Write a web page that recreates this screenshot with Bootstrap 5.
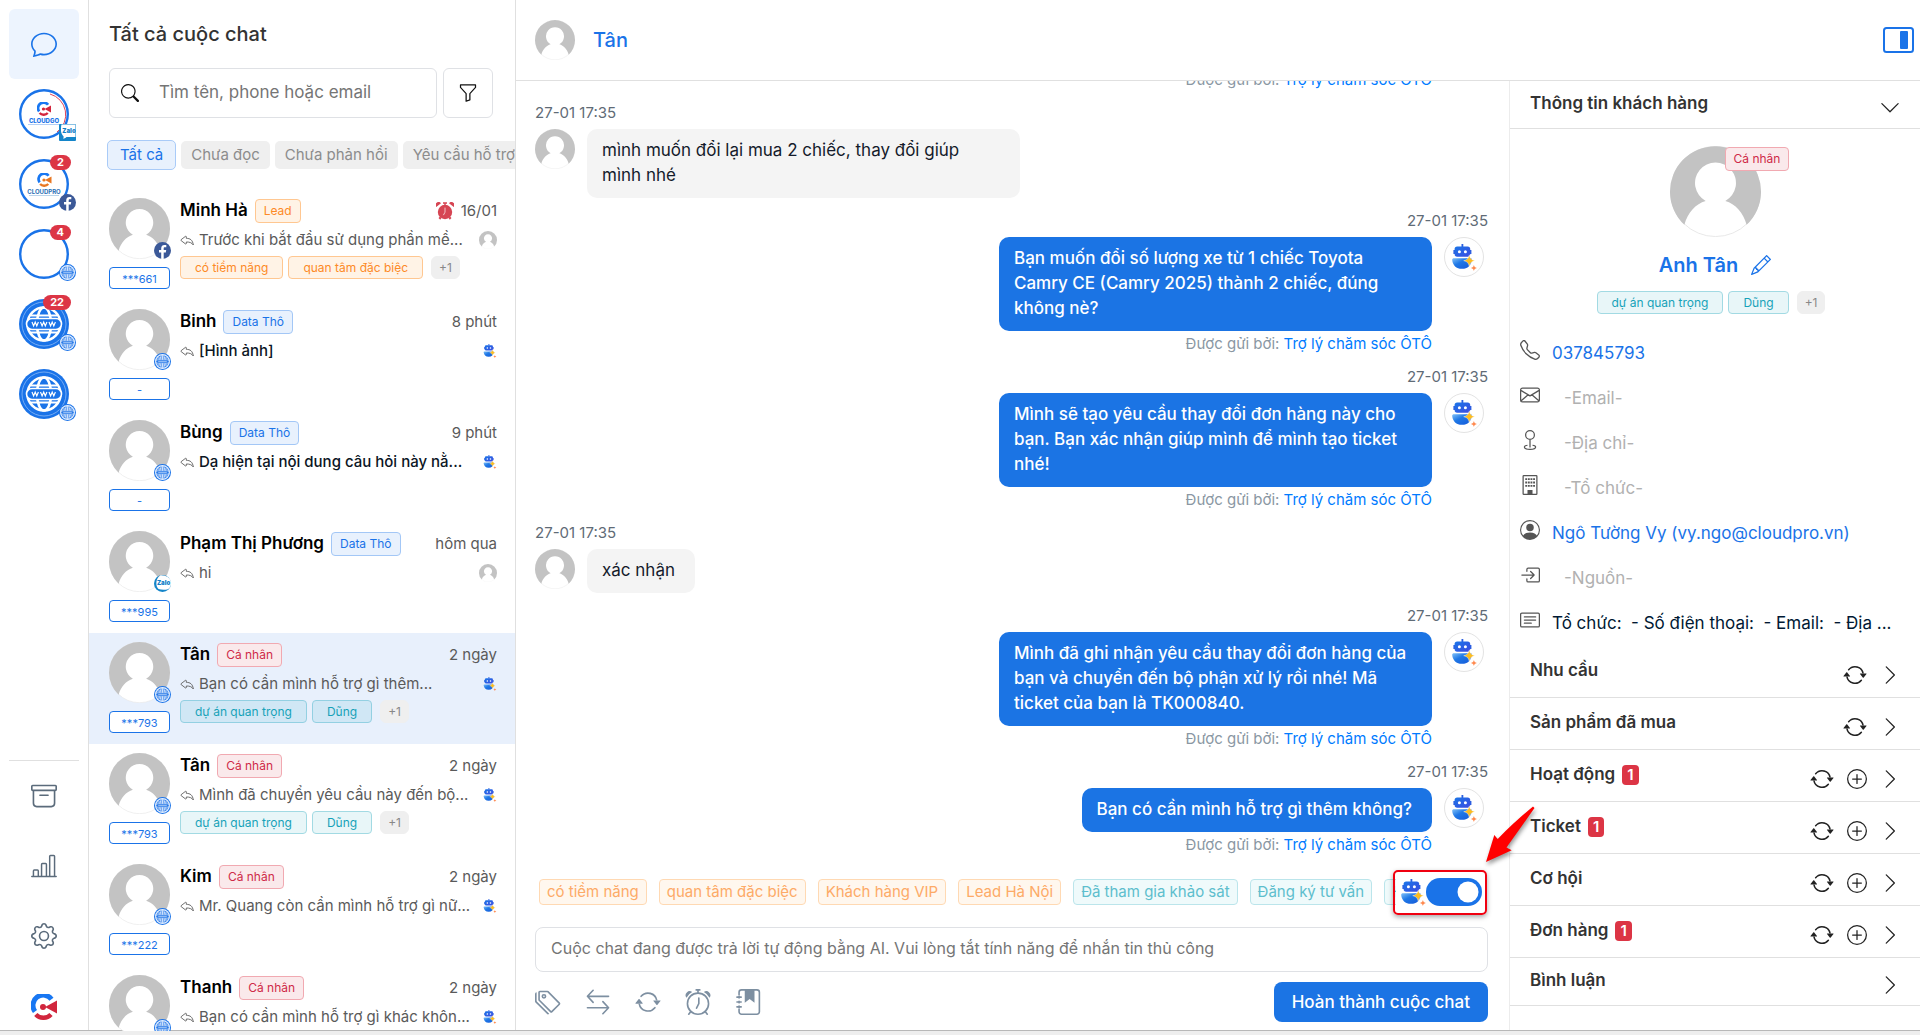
<!DOCTYPE html>
<html lang="vi">
<head>
<meta charset="utf-8">
<meta name="viewport" content="width=device-width, initial-scale=1">
<title>Tất cả cuộc chat</title>
<link href="https://cdn.jsdelivr.net/npm/bootstrap@5.3.0/dist/css/bootstrap.min.css" rel="stylesheet">
<style>
:root{--brand:#1a73e8;--line:#e0e0e0;--ink:#333}
body{font-family:Inter,"Noto Sans",sans-serif;font-size:17px;line-height:25px;color:var(--ink);background:#fff}
a{text-decoration:none}
svg{display:block;flex:none}
.status-strip{height:4px;background:#eee;box-shadow:0 -1px 0 #b8b8b8}
.ic-12{width:12px;height:14px}.ic-14{width:14px;height:14px}.ic-17{width:17px;height:17px}.ic-18{width:18px;height:18px}
.ic-20{width:20px;height:20px}.ic-24{width:24px;height:24px}.ic-26{width:26px;height:26px}

/* channel rail */
.rail{flex:0 0 89px;border-right:1px solid var(--line);padding:9px 9px 0;color:#5b6b7b}
.rail-link{height:70px;color:inherit}
.rail-link.current{background:#edf4fe;border-radius:6px;color:var(--brand)}
.channels{gap:20px;padding-top:10px}
.channel{width:50px;height:50px}
.channel .ring{width:50px;height:50px}
.channel .sub{right:-7px;bottom:-2px}
.count{right:-2px;top:-4px;height:15px;min-width:21px;padding:0 7px;border-radius:8px;background:#dc3545;color:#fff;font-size:11px;font-weight:700;line-height:15px}
.rail-end{border-top:1px solid var(--line)}
.rail-end .brand-link{height:60px;padding-top:12px}

/* conversation list */
.list-pane{flex:0 0 427px;border-right:1px solid var(--line)}
.list-head{padding:19px 22px 0 20px}
.pane-title{font-size:20px;line-height:30px;font-weight:500;margin:0 0 19px}
.search-box{height:50px;border:1px solid #dfe1e5;border-radius:6px;padding:0 11px}
.search-box input{border:0;padding:0 0 0 20px;font-size:17px;color:#333;box-shadow:none!important}
.search-box input::placeholder{color:#757575}
.filter-btn{width:50px;height:50px;border:1px solid #dfe1e5;border-radius:6px;background:#fff;color:#111;padding:0}
.chip-row{gap:5px;padding:22px 0 19px 18px;overflow:hidden}
.chip{height:28px;border:0;border-radius:5px;background:#efefef;color:#8c8c8c;font-size:15px;line-height:28px;padding:0 10px;white-space:nowrap}
.chip.on{height:30px;border:1px solid #a9cbf8;background:#e8f1fd;color:var(--brand);padding:0 12px}
.convo{height:111px;padding:9px 18px 0 20px;gap:10px;color:#5a5a5a;font-size:15px;flex:none}
.convo.current{background:#e8f0fc}
.face{width:61px;height:61px}
.face .sub{right:-1px;bottom:0}
.id-pill{width:61px;height:22px;margin-top:8px;border:1px solid var(--brand);border-radius:4px;background:#fff;color:var(--brand);font-size:11px;line-height:22px;text-align:center}
.convo .name{font-size:17px;font-weight:600;color:#000}
.line-a{height:25px;gap:7px}
.line-b{height:33px;gap:5px;white-space:nowrap}
.unread{font-weight:500;color:#0b1524}
.pill{display:inline-block;height:24px;border:1px solid;border-radius:4px;font-size:12px;line-height:22px;padding:0 8px;white-space:nowrap}
.pill.wide{padding:0 14px;height:23px;line-height:21px}
.pill.more{border-color:#efefef;background:#efefef;color:#888;padding:0 7px;margin-left:3px;border-radius:6px}
.p-orange{color:#fd8a26;background:#fff3e6;border-color:#ffc791}
.p-blue{color:var(--brand);background:#e8f1fd;border-color:#a3c7f6}
.p-red{color:#cf2a48;background:#fae9eb;border-color:#f1a9b1}
.p-teal{color:#17a2b8;background:#e8f6f8;border-color:#a2dae3}
.current .p-teal{background:#d0e7f5;border-color:#93d0e2}
.tag-set{gap:5px}

/* conversation */
.top-bar{height:81px;border-bottom:1px solid var(--line);padding:0 6px 0 19px;gap:18px}
.top-bar .who{font-size:20px;font-weight:500;color:var(--brand)}
.pic{width:40px;height:40px}
.chat-pane{padding:0 21px 9px 19px}
.msg{padding-bottom:12px}
.msg .at{font-size:15px;line-height:21px;margin-bottom:6px;color:#5f6b76}
.msg .bubble{max-width:433px;border-radius:10px;padding:9px 20px 10px 15px;background:#f4f4f4;color:#141b2b}
.msg .mid{gap:12px}
.msg.out .bubble{background:#1b74e4;color:#fff;font-weight:500}
.msg .via{font-size:15px;line-height:21px;padding-top:2px;color:#8a97a3;margin-right:56px}
.via a{color:#007bff}
.bot-pic{width:40px;height:40px;border:1px solid #e3e3e3;border-radius:50%;background:#fff;margin-right:4px}
.bot-pic svg,.ai-toggle .bot{width:25px;height:27px}
.tag-bar{height:50px}
.tag-scroll{gap:12px;padding-left:4px;overflow:hidden}
.tag-scroll .pill{flex:none;font-size:15px;height:26px;line-height:24px;padding:0 7px}
.tag-scroll .p-orange{color:#fdaa67;background:#fff7ee;border-color:#ffd9b3}
.tag-scroll .p-teal{color:#5dbecd;background:#effafb;border-color:#bbe5eb}
.ai-toggle{width:92px;height:45px;padding-left:5px}
.ai-toggle .form-check-input{width:56px;height:28px;margin:0;border:0;background-color:var(--brand);box-shadow:none}
.callout{inset:0 1px 0 -3px;border:2px solid #f00010;border-radius:5px;box-shadow:0 2px 5px rgba(0,0,0,.35);pointer-events:none}
.callout-arrow{left:88px;top:-66px;width:54px;height:62px;z-index:5;filter:drop-shadow(1px 3px 2px rgba(0,0,0,.4))}
.reply-box{height:45px;margin-top:10px;border:1px solid #dfe1e5;border-radius:8px;padding:0 15px 3px;font-size:16px;background:#fff}
.reply-box::placeholder{color:#757575}
.tool-row{margin-top:10px;gap:24px;color:#7d8fa1}
.tool-row .tool{border:0;background:none;padding:0;color:inherit}
.done-btn{height:40px;padding:0 18px;border:0;border-radius:8px;background:#1b74e4;font-size:17px;font-weight:500;line-height:25px}

/* customer panel */
.info-pane{flex:0 0 411px;border-left:1px solid #ececec}
.sec{height:52px;border-bottom:1px solid var(--line);padding:0 20px;font-weight:600;font-size:17px}
.sec.short{height:48px}
.sec h2{font-size:17px;line-height:25px;font-weight:600;margin:0 0 2px}
.sec .num{display:inline-block;background:#dc3545;color:#fff;border-radius:4px;font-size:15px;line-height:20px;padding:0 5px;margin-left:7px;font-weight:600}
.sec .acts{gap:13px;padding-top:6px}
.sec button{border:0;background:none;padding:0;color:#222}
.profile{padding-top:17px}
.big-pic{width:91px;height:91px}
.profile .pill.over{left:55px;top:1px}
.profile .full{font-size:20px;line-height:30px;font-weight:600;color:var(--brand);margin:13px 0 11px;gap:13px}
.profile .tag-set{padding:0 8px 17px 0}
.fact{height:45px;padding:0 16px 0 10px;gap:12px;color:#001833}
.fact svg{margin-bottom:7px;color:#555}
.fact .blank{color:#b1b1b1;padding-left:12px}
.fact a{color:var(--brand)}
</style>
</head>
<body class="vh-100 d-flex flex-column overflow-hidden">

<svg width="0" height="0" class="position-absolute" aria-hidden="true">
<defs>
<linearGradient id="gHead" x1="0" y1="0" x2="1" y2="1"><stop offset="0" stop-color="#1976e8"/><stop offset="1" stop-color="#3d4be0"/></linearGradient>
<linearGradient id="gBody" x1="0" y1="0" x2="1" y2="1"><stop offset="0" stop-color="#7fc0f8"/><stop offset=".4" stop-color="#1f78e6"/><stop offset="1" stop-color="#1558d8"/></linearGradient>
<symbol id="user" viewBox="0 0 60 60"><circle cx="30" cy="30" r="29.7" fill="#fff" stroke="#e6e6e6" stroke-width=".6"/><path fill="#c3c3c3" d="M9.5 52C11.500 44 17 38 23.500 36.200A13.500 13.500 0 1 1 36.500 36.200C43 38 48.500 44 50.500 52A30 30 0 1 0 9.500 52z"/></symbol>
<symbol id="bot" viewBox="0 0 25 27"><path fill="#2a5fe0" d="M9.500 0h1.800v3H9.500zM1.400 6h2v4h-2zM17.400 6h2v4h-2z"/><rect x="2.600" y="2.400" width="15.600" height="10.300" rx="2.600" fill="url(#gHead)"/><circle cx="7.400" cy="7.800" r="1.500" fill="#fff"/><circle cx="13.400" cy="7.800" r="1.500" fill="#fff"/><path fill="url(#gBody)" d="M2 14.300h16.500c1 0 1.500.6 1.300 1.700-.5 5.300-4 8.800-9.800 8.800S.7 21.300.2 16c-.2-1.100.7-1.700 1.800-1.700z"/><path fill="#fdbc1f" stroke="#fff" stroke-width=".4" d="M17.300 10.800c.8 3.800 1.900 5 5.600 5.900-3.700.9-4.800 2.100-5.600 5.900-.8-3.800-1.900-5-5.600-5.900 3.700-.9 4.800-2.100 5.600-5.900z"/><path fill="#ff8a50" d="M21.900 21c.5 2 1.100 2.500 3 3-1.900.5-2.500 1-3 3-.5-2-1.100-2.500-3-3 1.900-.5 2.500-1 3-3z"/></symbol>
<symbol id="www" viewBox="0 0 50 50"><circle cx="25" cy="25" r="25" fill="#1a73e8"/><circle cx="25" cy="25" r="22" fill="none" stroke="#7fb2f5" stroke-width=".9"/><g fill="none" stroke="#fff" stroke-width="2.600"><circle cx="25" cy="25" r="16.500"/><ellipse cx="25" cy="25" rx="7" ry="16.500"/></g><path stroke="#fff" stroke-width="2" d="M12 16.500h26M12 33.500h26"/><rect x="7.500" y="19.500" width="35" height="11" rx="5.500" fill="#1a73e8" stroke="#fff" stroke-width="1.600"/><path fill="none" stroke="#fff" stroke-width="1.200" d="M13 23l1.600 4 1.600-4 1.600 4 1.600-4M21.500 23l1.600 4 1.600-4 1.600 4 1.600-4M30 23l1.600 4 1.600-4 1.600 4 1.600-4"/></symbol>
<symbol id="web" viewBox="0 0 17 17"><circle cx="8.500" cy="8.500" r="8.500" fill="#1a73e8"/><circle cx="8.500" cy="8.500" r="7.500" fill="#e4effe"/><circle cx="8.500" cy="8.500" r="6.200" fill="#2a7ae8"/><g fill="none" stroke="#d8e8fd" stroke-width=".9"><ellipse cx="8.500" cy="8.500" rx="2.800" ry="6.200"/><path d="M8.500 2.300v12.400M3.500 5h10M3.500 12h10"/></g><rect x="1.800" y="6.800" width="13.400" height="3.400" rx="1.700" fill="#2a7ae8" stroke="#e4effe" stroke-width=".7"/><path stroke="#a9cbf8" stroke-width=".8" d="M4.200 8.500h8.600"/></symbol>
<symbol id="fb" viewBox="0 0 17 17"><circle cx="8.500" cy="8.500" r="8.500" fill="#3b5998"/><path fill="#fff" d="M7.200 17V10.600H5V8h2.200V6.200c0-2.100 1.300-3.300 3.200-3.300.9 0 1.700.1 1.900.2v2.200H11c-1.100 0-1.300.5-1.300 1.200V8h2.500l-.4 2.600H9.700V17z"/></symbol>
<symbol id="zaloSq" viewBox="0 0 17 17"><rect width="17" height="17" rx="1" fill="#1485c9"/><path fill="#fff" d="M2.500.5h14v12.500H7.500c-1 1-2.200 1.500-3.500 1.600.6-.7.8-1.500.6-2.200C2.800 10.500 2 8.500 2 6.500 2 4 2 2 2.500.5z"/><text x="10" y="9" text-anchor="middle" font-size="6" font-weight="900" font-family="Inter,sans-serif" fill="#0f80c8">Zalo</text></symbol>
<symbol id="zalo" viewBox="0 0 17 17"><circle cx="8.500" cy="8.500" r="8.500" fill="#1485c9"/><path fill="#fff" d="M6 .4C12 0 17 3 17 8c0 3-1 5-3 6.300-3 .8-7 .6-9.500-.2C1.500 11 1.300 4 6 .4z"/><text x="9.600" y="9.500" text-anchor="middle" font-size="6" font-weight="900" font-family="Inter,sans-serif" fill="#0f80c8">Zalo</text></symbol>
<symbol id="cmark" viewBox="0 0 26 26"><path fill="none" stroke="#1877f2" stroke-width="5" d="M20.500 5.200A10 10 0 0 0 4 17.500"/><path fill="none" stroke="currentColor" stroke-width="4.500" d="M4.800 20.500A10.500 10.500 0 0 0 20 20.500"/><circle cx="12" cy="13" r="3" fill="currentColor"/><path fill="currentColor" d="M14 13l12-6.500v13z"/></symbol>
<symbol id="chat" viewBox="0 0 16 16"><path d="M2.678 11.894a1 1 0 0 1 .287.801 11 11 0 0 1-.398 2c1.395-.323 2.247-.697 2.634-.893a1 1 0 0 1 .71-.074A8 8 0 0 0 8 14c3.996 0 7-2.807 7-6s-3.004-6-7-6-7 2.808-7 6c0 1.468.617 2.830 1.678 3.894m-.493 3.905a22 22 0 0 1-.713.129c-.2.032-.352-.176-.273-.362a10 10 0 0 0 .244-.637l.003-.01c.248-.72.45-1.548.524-2.319C.743 11.370 0 9.760 0 8c0-3.866 3.582-7 8-7s8 3.134 8 7-3.582 7-8 7a9 9 0 0 1-2.347-.306c-.52.263-1.639.742-3.468 1.105"/></symbol>
<symbol id="search" viewBox="0 0 16 16"><path d="M11.742 10.344a6.500 6.500 0 1 0-1.397 1.398h-.001q.044.06.098.115l3.850 3.850a1 1 0 0 0 1.415-1.414l-3.850-3.850a1 1 0 0 0-.115-.1zM12 6.500a5.500 5.500 0 1 1-11 0 5.500 5.500 0 0 1 11 0"/></symbol>
<symbol id="funnel" viewBox="0 0 16 16"><path d="M1.500 1.500A.5.5 0 0 1 2 1h12a.5.5 0 0 1 .5.5v2a.5.5 0 0 1-.128.334L10 8.692V13.500a.5.5 0 0 1-.342.474l-3 1A.5.5 0 0 1 6 14.500V8.692L1.628 3.834A.5.5 0 0 1 1.500 3.500zm1 .5v1.308l4.372 4.858A.5.5 0 0 1 7 8.500v5.306l2-.666V8.500a.5.5 0 0 1 .128-.334L13.500 3.308V2z"/></symbol>
<symbol id="reply" viewBox="0 0 16 16"><path fill="none" stroke="currentColor" stroke-linejoin="round" d="M7.200 10.300v1.800c0 .5-.5.700-.9.400L1.300 8.700a.7.7 0 0 1 0-1.100l5-3.800c.4-.3.900-.1.900.4v1.900c4.500 0 7.300 2 8 7.600-1.800-2.700-4.300-3.500-8-3.400z"/></symbol>
<symbol id="archive" viewBox="0 0 16 16"><path d="M0 2a1 1 0 0 1 1-1h14a1 1 0 0 1 1 1v2a1 1 0 0 1-1 1v7.500a2.500 2.500 0 0 1-2.500 2.500h-9A2.500 2.500 0 0 1 1 12.500V5a1 1 0 0 1-1-1zm2 3v7.500A1.500 1.500 0 0 0 3.500 14h9a1.500 1.500 0 0 0 1.500-1.500V5zm13-3H1v2h14zM5 7.500a.5.5 0 0 1 .5-.5h5a.5.5 0 0 1 0 1h-5a.5.5 0 0 1-.5-.5"/></symbol>
<symbol id="bars" viewBox="0 0 16 16"><path fill="none" stroke="currentColor" stroke-width=".9" stroke-linecap="round" d="M.5 14.500h15M1.500 14.500v-3.500a.5.5 0 0 1 .5-.5h2a.5.5 0 0 1 .5.5v3.500M6.500 14.500V7a.5.5 0 0 1 .5-.5h2a.5.5 0 0 1 .5.5v7.500M11.500 14.500V2a.5.5 0 0 1 .5-.5h2a.5.5 0 0 1 .5.5v12.500"/></symbol>
<symbol id="gear" viewBox="0 0 16 16"><path d="M8 4.754a3.246 3.246 0 1 0 0 6.492 3.246 3.246 0 0 0 0-6.492M5.754 8a2.246 2.246 0 1 1 4.492 0 2.246 2.246 0 0 1-4.492 0"/><path d="M9.796 1.343c-.527-1.790-3.065-1.790-3.592 0l-.094.319a.873.873 0 0 1-1.255.52l-.292-.16c-1.640-.892-3.433.902-2.540 2.541l.159.292a.873.873 0 0 1-.52 1.255l-.319.094c-1.790.527-1.790 3.065 0 3.592l.319.094a.873.873 0 0 1 .52 1.255l-.16.292c-.892 1.640.901 3.434 2.541 2.540l.292-.159a.873.873 0 0 1 1.255.52l.094.319c.527 1.790 3.065 1.790 3.592 0l.094-.319a.873.873 0 0 1 1.255-.52l.292.16c1.640.893 3.434-.902 2.540-2.541l-.159-.292a.873.873 0 0 1 .52-1.255l.319-.094c1.790-.527 1.790-3.065 0-3.592l-.319-.094a.873.873 0 0 1-.52-1.255l.16-.292c.893-1.640-.902-3.433-2.541-2.540l-.292.159a.873.873 0 0 1-1.255-.52zm-2.633.283c.246-.835 1.428-.835 1.674 0l.094.319a1.873 1.873 0 0 0 2.693 1.115l.291-.16c.764-.415 1.600.42 1.184 1.185l-.159.292a1.873 1.873 0 0 0 1.116 2.692l.318.094c.835.246.835 1.428 0 1.674l-.319.094a1.873 1.873 0 0 0-1.115 2.693l.16.291c.415.764-.42 1.600-1.185 1.184l-.291-.159a1.873 1.873 0 0 0-2.693 1.116l-.094.318c-.246.835-1.428.835-1.674 0l-.094-.319a1.873 1.873 0 0 0-2.692-1.115l-.292.16c-.764.415-1.600-.42-1.184-1.185l.159-.291A1.873 1.873 0 0 0 1.945 8.930l-.319-.094c-.835-.246-.835-1.428 0-1.674l.319-.094A1.873 1.873 0 0 0 3.060 4.377l-.16-.292c-.415-.764.42-1.600 1.185-1.184l.292.159a1.873 1.873 0 0 0 2.692-1.115z"/></symbol>
<symbol id="repeat" viewBox="0 0 16 16"><path d="M11.534 7h3.932a.25.25 0 0 1 .192.41l-1.966 2.360a.25.25 0 0 1-.384 0l-1.966-2.360a.25.25 0 0 1 .192-.41m-11 2h3.932a.25.25 0 0 0 .192-.41L2.692 6.230a.25.25 0 0 0-.384 0L.342 8.590A.25.25 0 0 0 .534 9"/><path d="M8 3c-1.552 0-2.940.707-3.857 1.818a.5.5 0 1 1-.771-.636A6.002 6.002 0 0 1 13.917 7H12.900A5 5 0 0 0 8 3M3.100 9a5.002 5.002 0 0 0 8.757 2.182.5.5 0 1 1 .771.636A6.002 6.002 0 0 1 2.083 9z"/></symbol>
<symbol id="plus" viewBox="0 0 16 16"><path fill="none" stroke="currentColor" stroke-linecap="round" d="M8 4.500v7M4.500 8h7M8 .5a7.500 7.500 0 1 0 0 15 7.500 7.500 0 0 0 0-15z"/></symbol>
<symbol id="right" viewBox="0 0 16 16"><path fill="none" stroke="currentColor" stroke-linecap="round" stroke-linejoin="round" d="M5 1.500L11.500 8 5 14.500"/></symbol>
<symbol id="down" viewBox="0 0 16 16"><path fill="none" stroke="currentColor" stroke-linecap="round" stroke-linejoin="round" d="M1.500 4.500L8 11l6.500-6.500"/></symbol>
<symbol id="alarmRed" viewBox="0 0 18 18"><circle cx="9" cy="10" r="7.200" fill="#d64553"/><path fill="#d64553" d="M.2 5A3 3 0 0 1 5 1.200zM17.800 5A3 3 0 0 0 13 1.200zM7 .3h4v1.500H7zM8.300 1h1.400v2H8.300zM2.500 16l1.500-1.500 1.500 1.500-1.300 1.700zM15.500 16L14 14.500 12.500 16l1.300 1.700z"/><path fill="none" stroke="#f3c4c9" stroke-width="1" stroke-linecap="round" d="M9 6v4.200l-1.400 2.600"/></symbol>
<symbol id="alarm" viewBox="0 0 16 16"><g fill="none" stroke="currentColor" stroke-linecap="round"><circle cx="8" cy="9" r="6.500"/><path d="M8.500 5.500V9l-1.400 2.800M3.600 13.800l-1.300 1.700M12.400 13.800l1.300 1.700"/></g><path fill="currentColor" d="M6.500 0h3v1h-1v1.600h-1V1h-1zM.9 5.400A2.500 2.500 0 0 1 4.400 1.900 8 8 0 0 0 .9 5.400zM15.100 5.400a2.500 2.500 0 0 0-3.500-3.500 8 8 0 0 1 3.500 3.500z"/></symbol>
<symbol id="tags" viewBox="0 0 16 16"><path d="M3 2v4.586l7 7L14.586 9l-7-7zM2 2a1 1 0 0 1 1-1h4.586a1 1 0 0 1 .707.293l7 7a1 1 0 0 1 0 1.414l-4.586 4.586a1 1 0 0 1-1.414 0l-7-7A1 1 0 0 1 2 6.586z"/><path d="M5.500 5a.5.5 0 1 1 0-1 .5.5 0 0 1 0 1m0 1a1.500 1.500 0 1 0 0-3 1.500 1.500 0 0 0 0 3M1 7.086a1 1 0 0 0 .293.707L8.750 15.250l-.043.043a1 1 0 0 1-1.414 0l-7-7A1 1 0 0 1 0 7.586V3a1 1 0 0 1 1-1z"/></symbol>
<symbol id="swap" viewBox="0 0 16 16"><path fill="none" stroke="currentColor" stroke-linecap="round" stroke-linejoin="round" d="M5 .8L1.500 4.500 5 8.200M1.500 4.500h13M11 7.800l3.500 3.700-3.500 3.700M14.500 11.500h-13"/></symbol>
<symbol id="journal" viewBox="0 0 16 16"><path fill="none" stroke="currentColor" stroke-linecap="round" d="M2.500 3.500V2A1.500 1.500 0 0 1 4 .5h9.500A1.500 1.500 0 0 1 15 2v12a1.500 1.500 0 0 1-1.500 1.500H4A1.500 1.500 0 0 1 2.500 14v-1.500M1.200 5h2.600M1.200 8h2.600M1.200 11h2.600M2.500 4.500v1M2.500 7.500v1M2.500 10.500v1"/><path fill="currentColor" d="M6 .5h6v8L9 6.200 6 8.500z"/></symbol>
<symbol id="layout" viewBox="0 0 31 26"><rect x="1" y="1" width="29" height="24" rx="2.500" fill="none" stroke="currentColor" stroke-width="2"/><rect x="17" y="4" width="8" height="18" rx="1" fill="currentColor"/></symbol>
<symbol id="pencil" viewBox="0 0 16 16"><path d="M12.146.146a.5.5 0 0 1 .708 0l3 3a.5.5 0 0 1 0 .708l-10 10a.5.5 0 0 1-.168.11l-5 2a.5.5 0 0 1-.65-.65l2-5a.5.5 0 0 1 .11-.168zM11.207 2.500 13.500 4.793 14.793 3.500 12.500 1.207zm1.586 3L10.500 3.207 4 9.707V10h.5a.5.5 0 0 1 .5.5v.5h.5a.5.5 0 0 1 .5.5v.5h.293zm-9.761 5.175-.106.106-1.528 3.821 3.821-1.528.106-.106A.5.5 0 0 1 5 12.500V12h-.5a.5.5 0 0 1-.5-.5V11h-.5a.5.5 0 0 1-.468-.325"/></symbol>
<symbol id="phone" viewBox="0 0 16 16"><path d="M3.654 1.328a.678.678 0 0 0-1.015-.063L1.605 2.300c-.483.484-.661 1.169-.45 1.770a17.600 17.600 0 0 0 4.168 6.608 17.600 17.600 0 0 0 6.608 4.168c.601.211 1.286.033 1.770-.45l1.034-1.034a.678.678 0 0 0-.063-1.015l-2.307-1.794a.68.68 0 0 0-.58-.122l-2.190.547a1.750 1.750 0 0 1-1.657-.459L5.482 8.062a1.750 1.750 0 0 1-.46-1.657l.548-2.190a.68.68 0 0 0-.122-.58zM1.884.511a1.745 1.745 0 0 1 2.612.163L6.290 2.980c.329.423.445.974.315 1.494l-.547 2.190a.68.68 0 0 0 .178.643l2.457 2.457a.68.68 0 0 0 .644.178l2.189-.547a1.750 1.750 0 0 1 1.494.315l2.306 1.794c.829.645.905 1.870.163 2.611l-1.034 1.034c-.74.74-1.846 1.065-2.877.702a18.600 18.600 0 0 1-7.010-4.420 18.600 18.600 0 0 1-4.420-7.009c-.362-1.030-.037-2.137.703-2.877z"/></symbol>
<symbol id="mail" viewBox="0 0 16 16"><path fill="none" stroke="currentColor" stroke-linejoin="round" d="M2 2.500h12a1.500 1.500 0 0 1 1.500 1.500v8a1.500 1.500 0 0 1-1.500 1.500H2A1.500 1.500 0 0 1 .5 12V4A1.500 1.500 0 0 1 2 2.500zM.7 4.300L8 8.700l7.300-4.400M.7 12.800l5.800-5M15.300 12.800l-5.800-5"/></symbol>
<symbol id="pin" viewBox="0 0 16 16"><path fill="none" stroke="currentColor" d="M8 .5a3.500 3.500 0 1 0 0 7 3.500 3.500 0 0 0 0-7zM8 7.500v6.500M6 12.200c-1.500.2-2.500.7-2.500 1.400 0 1 2 1.900 4.500 1.900s4.500-.9 4.500-1.900c0-.7-1-1.200-2.500-1.400"/></symbol>
<symbol id="building" viewBox="0 0 16 16"><rect x="2.500" y=".5" width="11" height="15" rx=".5" fill="none" stroke="currentColor"/><path fill="currentColor" d="M4.200 2.500h1.500V4H4.200zM6.300 2.500h1.500V4H6.300zM8.400 2.500h1.500V4H8.400zM10.500 2.500H12V4h-1.500zM4.200 5.200h1.500v1.500H4.200zM6.300 5.200h1.500v1.500H6.300zM8.400 5.200h1.500v1.500H8.400zM10.500 5.200H12v1.500h-1.500zM4.200 7.900h1.500v1.500H4.200zM6.300 7.900h1.500v1.500H6.300zM8.400 7.900h1.500v1.500H8.400zM10.500 7.900H12v1.500h-1.500zM6 12h4v3.500H6z"/></symbol>
<symbol id="person" viewBox="0 0 16 16"><path d="M11 6a3 3 0 1 1-6 0 3 3 0 0 1 6 0"/><path fill-rule="evenodd" d="M0 8a8 8 0 1 1 16 0A8 8 0 0 1 0 8m8-7a7 7 0 0 0-5.468 11.370C3.242 11.226 4.805 10 8 10s4.757 1.225 5.468 2.370A7 7 0 0 0 8 1"/></symbol>
<symbol id="enter" viewBox="0 0 16 16"><path fill="none" stroke="currentColor" stroke-linecap="round" stroke-linejoin="round" d="M5.500 5V3.500a1 1 0 0 1 1-1h8a1 1 0 0 1 1 1v9a1 1 0 0 1-1 1h-8a1 1 0 0 1-1-1V11M1.500 8H11M8.500 5.200L11.300 8l-2.800 2.800"/></symbol>
<symbol id="note" viewBox="0 0 16 16"><path fill="none" stroke="currentColor" stroke-linecap="round" d="M1.500 2.500h13a1 1 0 0 1 1 1v9a1 1 0 0 1-1 1h-13a1 1 0 0 1-1-1v-9a1 1 0 0 1 1-1zM3.500 5.500h9M3.500 8h9M3.500 10.500h5.500"/></symbol>
</defs></svg>

<div class="d-flex flex-grow-1 overflow-hidden">

<nav class="rail d-flex flex-column" aria-label="Kênh">
  <a href="#" class="rail-link current d-flex align-items-center justify-content-center"><svg class="ic-26" fill="currentColor"><use href="#chat"/></svg></a>
  <div class="channels d-flex flex-column align-items-center">
    <a href="#" class="channel position-relative">
      <svg class="ring" viewBox="0 0 50 50"><circle cx="25" cy="25" r="23.800" fill="#fff" stroke="#1a73e8" stroke-width="2.400"/><path d="M31 5a21.500 21.500 0 0 1 7 38" fill="none" stroke="#e0455a" stroke-width="1"/><g color="#d3243c"><use href="#cmark" x="18" y="13" width="14" height="14"/></g><text x="25" y="33.500" text-anchor="middle" font-size="6" font-weight="800" font-family="Inter,sans-serif" fill="#1a73e8">CLOUDGO</text><path stroke="#9fc3f2" stroke-width=".8" d="M9 35.500h32"/></svg>
      <svg class="ic-17 sub position-absolute"><use href="#zaloSq"/></svg>
    </a>
    <a href="#" class="channel position-relative">
      <svg class="ring" viewBox="0 0 50 50"><circle cx="25" cy="25" r="23.800" fill="#fff" stroke="#1a73e8" stroke-width="2.400"/><g color="#e87722"><use href="#cmark" x="18" y="14" width="15" height="14"/></g><text x="25" y="34.500" text-anchor="middle" font-size="6" font-weight="700" font-family="Inter,sans-serif" fill="#2a6fb5">CLOUDPRO</text><path stroke="#a9c9e6" stroke-width=".8" d="M10 36.500h30"/></svg>
      <span class="count position-absolute text-center">2</span>
      <svg class="ic-17 sub position-absolute"><use href="#fb"/></svg>
    </a>
    <a href="#" class="channel position-relative">
      <svg class="ring" viewBox="0 0 50 50"><circle cx="25" cy="25" r="23.800" fill="#fff" stroke="#1a73e8" stroke-width="2.400"/></svg>
      <span class="count position-absolute text-center">4</span>
      <svg class="ic-17 sub position-absolute"><use href="#web"/></svg>
    </a>
    <a href="#" class="channel position-relative">
      <svg class="ring"><use href="#www"/></svg>
      <span class="count position-absolute text-center">22</span>
      <svg class="ic-17 sub position-absolute"><use href="#web"/></svg>
    </a>
    <a href="#" class="channel position-relative">
      <svg class="ring"><use href="#www"/></svg>
      <svg class="ic-17 sub position-absolute"><use href="#web"/></svg>
    </a>
  </div>
  <div class="rail-end mt-auto">
    <a href="#" class="rail-link d-flex align-items-center justify-content-center"><svg class="ic-26" fill="#5b6b7b"><use href="#archive"/></svg></a>
    <a href="#" class="rail-link d-flex align-items-center justify-content-center"><svg class="ic-26" color="#5b6b7b"><use href="#bars"/></svg></a>
    <a href="#" class="rail-link d-flex align-items-center justify-content-center"><svg class="ic-26" fill="#5b6b7b"><use href="#gear"/></svg></a>
    <a href="#" class="brand-link d-flex align-items-center justify-content-center"><svg class="ic-26" color="#d1263d"><use href="#cmark"/></svg></a>
  </div>
</nav>

<aside class="list-pane d-flex flex-column overflow-hidden">
  <div class="list-head">
    <h1 class="pane-title">Tất cả cuộc chat</h1>
    <div class="d-flex" style="gap:6px">
      <label class="search-box d-flex align-items-center flex-grow-1"><svg class="ic-18" fill="#111"><use href="#search"/></svg><input type="text" class="form-control" placeholder="Tìm tên, phone hoặc email" aria-label="Tìm kiếm"></label>
      <button type="button" class="filter-btn d-flex align-items-center justify-content-center" aria-label="Lọc"><svg class="ic-20" fill="currentColor"><use href="#funnel"/></svg></button>
    </div>
  </div>
  <div class="chip-row d-flex align-items-center flex-shrink-0">
    <button type="button" class="chip on">Tất cả</button><button type="button" class="chip">Chưa đọc</button><button type="button" class="chip">Chưa phản hồi</button><button type="button" class="chip">Yêu cầu hỗ trợ</button>
  </div>

  <a href="#" class="convo d-flex">
    <div><div class="face position-relative"><svg class="w-100 h-100"><use href="#user"/></svg><svg class="ic-17 sub position-absolute"><use href="#fb"/></svg></div><div class="id-pill">***661</div></div>
    <div class="flex-grow-1">
      <div class="line-a d-flex align-items-center"><span class="name">Minh Hà</span><span class="pill p-orange">Lead</span><svg class="ic-18 ms-auto"><use href="#alarmRed"/></svg><span>16/01</span></div>
      <div class="line-b d-flex align-items-center"><svg class="ic-14"><use href="#reply"/></svg><span>Trước khi bắt đầu sử dụng phần mề...</span><svg class="ic-18 ms-auto"><use href="#user"/></svg></div>
      <div class="tag-set d-flex"><span class="pill wide p-orange">có tiềm năng</span><span class="pill wide p-orange">quan tâm đặc biệc</span><span class="pill wide more">+1</span></div>
    </div>
  </a>
  <a href="#" class="convo d-flex">
    <div><div class="face position-relative"><svg class="w-100 h-100"><use href="#user"/></svg><svg class="ic-17 sub position-absolute"><use href="#web"/></svg></div><div class="id-pill">-</div></div>
    <div class="flex-grow-1">
      <div class="line-a d-flex align-items-center"><span class="name">Binh</span><span class="pill p-blue">Data Thô</span><span class="ms-auto">8 phút</span></div>
      <div class="line-b d-flex align-items-center"><svg class="ic-14"><use href="#reply"/></svg><span class="unread">[Hình ảnh]</span><svg class="ic-14 ms-auto"><use href="#bot"/></svg></div>
    </div>
  </a>
  <a href="#" class="convo d-flex">
    <div><div class="face position-relative"><svg class="w-100 h-100"><use href="#user"/></svg><svg class="ic-17 sub position-absolute"><use href="#web"/></svg></div><div class="id-pill">-</div></div>
    <div class="flex-grow-1">
      <div class="line-a d-flex align-items-center"><span class="name">Bùng</span><span class="pill p-blue">Data Thô</span><span class="ms-auto">9 phút</span></div>
      <div class="line-b d-flex align-items-center"><svg class="ic-14"><use href="#reply"/></svg><span class="unread">Dạ hiện tại nội dung câu hỏi này nằ...</span><svg class="ic-14 ms-auto"><use href="#bot"/></svg></div>
    </div>
  </a>
  <a href="#" class="convo d-flex">
    <div><div class="face position-relative"><svg class="w-100 h-100"><use href="#user"/></svg><svg class="ic-17 sub position-absolute"><use href="#zalo"/></svg></div><div class="id-pill">***995</div></div>
    <div class="flex-grow-1">
      <div class="line-a d-flex align-items-center"><span class="name">Phạm Thị Phương</span><span class="pill p-blue">Data Thô</span><span class="ms-auto">hôm qua</span></div>
      <div class="line-b d-flex align-items-center"><svg class="ic-14"><use href="#reply"/></svg><span>hi</span><svg class="ic-18 ms-auto"><use href="#user"/></svg></div>
    </div>
  </a>
  <a href="#" class="convo current d-flex">
    <div><div class="face position-relative"><svg class="w-100 h-100"><use href="#user"/></svg><svg class="ic-17 sub position-absolute"><use href="#web"/></svg></div><div class="id-pill">***793</div></div>
    <div class="flex-grow-1">
      <div class="line-a d-flex align-items-center"><span class="name">Tân</span><span class="pill p-red">Cá nhân</span><span class="ms-auto">2 ngày</span></div>
      <div class="line-b d-flex align-items-center"><svg class="ic-14"><use href="#reply"/></svg><span>Bạn có cần mình hỗ trợ gì thêm...</span><svg class="ic-14 ms-auto"><use href="#bot"/></svg></div>
      <div class="tag-set d-flex"><span class="pill wide p-teal">dự án quan trọng</span><span class="pill wide p-teal">Dũng</span><span class="pill wide more">+1</span></div>
    </div>
  </a>
  <a href="#" class="convo d-flex">
    <div><div class="face position-relative"><svg class="w-100 h-100"><use href="#user"/></svg><svg class="ic-17 sub position-absolute"><use href="#web"/></svg></div><div class="id-pill">***793</div></div>
    <div class="flex-grow-1">
      <div class="line-a d-flex align-items-center"><span class="name">Tân</span><span class="pill p-red">Cá nhân</span><span class="ms-auto">2 ngày</span></div>
      <div class="line-b d-flex align-items-center"><svg class="ic-14"><use href="#reply"/></svg><span>Mình đã chuyển yêu cầu này đến bộ...</span><svg class="ic-14 ms-auto"><use href="#bot"/></svg></div>
      <div class="tag-set d-flex"><span class="pill wide p-teal">dự án quan trọng</span><span class="pill wide p-teal">Dũng</span><span class="pill wide more">+1</span></div>
    </div>
  </a>
  <a href="#" class="convo d-flex">
    <div><div class="face position-relative"><svg class="w-100 h-100"><use href="#user"/></svg><svg class="ic-17 sub position-absolute"><use href="#web"/></svg></div><div class="id-pill">***222</div></div>
    <div class="flex-grow-1">
      <div class="line-a d-flex align-items-center"><span class="name">Kim</span><span class="pill p-red">Cá nhân</span><span class="ms-auto">2 ngày</span></div>
      <div class="line-b d-flex align-items-center"><svg class="ic-14"><use href="#reply"/></svg><span>Mr. Quang còn cần mình hỗ trợ gì nữ...</span><svg class="ic-14 ms-auto"><use href="#bot"/></svg></div>
    </div>
  </a>
  <a href="#" class="convo d-flex">
    <div><div class="face position-relative"><svg class="w-100 h-100"><use href="#user"/></svg><svg class="ic-17 sub position-absolute"><use href="#web"/></svg></div></div>
    <div class="flex-grow-1">
      <div class="line-a d-flex align-items-center"><span class="name">Thanh</span><span class="pill p-red">Cá nhân</span><span class="ms-auto">2 ngày</span></div>
      <div class="line-b d-flex align-items-center"><svg class="ic-14"><use href="#reply"/></svg><span>Bạn có cần mình hỗ trợ gì khác khôn...</span><svg class="ic-14 ms-auto"><use href="#bot"/></svg></div>
    </div>
  </a>
</aside>

<div class="d-flex flex-column flex-grow-1" style="min-width:0">
  <header class="top-bar d-flex align-items-center flex-shrink-0">
    <svg class="pic"><use href="#user"/></svg><a href="#" class="who">Tân</a>
    <button type="button" class="btn p-0 border-0 ms-auto" aria-label="Bảng thông tin"><svg width="31" height="26" color="#1a73e8"><use href="#layout"/></svg></button>
  </header>
  <div class="d-flex flex-grow-1" style="min-height:0">

    <main class="chat-pane d-flex flex-column flex-grow-1" style="min-width:0">
      <div class="d-flex flex-column justify-content-end flex-grow-1 overflow-hidden" style="min-height:0">
        <div class="msg out d-flex flex-column align-items-end"><div class="via">Được gửi bởi: <a href="#">Trợ lý chăm sóc ÔTÔ</a></div></div>
        <div class="msg">
          <div class="at">27-01 17:35</div>
          <div class="mid d-flex"><svg class="pic"><use href="#user"/></svg><div class="bubble">mình muốn đổi lại mua 2 chiếc, thay đổi giúp mình nhé</div></div>
        </div>
        <div class="msg out d-flex flex-column align-items-end">
          <div class="at">27-01 17:35</div>
          <div class="mid d-flex"><div class="bubble">Bạn muốn đổi số lượng xe từ 1 chiếc Toyota Camry CE (Camry 2025) thành 2 chiếc, đúng không nè?</div><div class="bot-pic d-flex align-items-center justify-content-center"><svg><use href="#bot"/></svg></div></div>
          <div class="via">Được gửi bởi: <a href="#">Trợ lý chăm sóc ÔTÔ</a></div>
        </div>
        <div class="msg out d-flex flex-column align-items-end">
          <div class="at">27-01 17:35</div>
          <div class="mid d-flex"><div class="bubble">Mình sẽ tạo yêu cầu thay đổi đơn hàng này cho bạn. Bạn xác nhận giúp mình để mình tạo ticket nhé!</div><div class="bot-pic d-flex align-items-center justify-content-center"><svg><use href="#bot"/></svg></div></div>
          <div class="via">Được gửi bởi: <a href="#">Trợ lý chăm sóc ÔTÔ</a></div>
        </div>
        <div class="msg">
          <div class="at">27-01 17:35</div>
          <div class="mid d-flex"><svg class="pic"><use href="#user"/></svg><div class="bubble">xác nhận</div></div>
        </div>
        <div class="msg out d-flex flex-column align-items-end">
          <div class="at">27-01 17:35</div>
          <div class="mid d-flex"><div class="bubble">Mình đã ghi nhận yêu cầu thay đổi đơn hàng của bạn và chuyển đến bộ phận xử lý rồi nhé! Mã ticket của bạn là TK000840.</div><div class="bot-pic d-flex align-items-center justify-content-center"><svg><use href="#bot"/></svg></div></div>
          <div class="via">Được gửi bởi: <a href="#">Trợ lý chăm sóc ÔTÔ</a></div>
        </div>
        <div class="msg out d-flex flex-column align-items-end">
          <div class="at">27-01 17:35</div>
          <div class="mid d-flex"><div class="bubble">Bạn có cần mình hỗ trợ gì thêm không?</div><div class="bot-pic d-flex align-items-center justify-content-center"><svg><use href="#bot"/></svg></div></div>
          <div class="via">Được gửi bởi: <a href="#">Trợ lý chăm sóc ÔTÔ</a></div>
        </div>
      </div>

      <div class="tag-bar d-flex align-items-center flex-shrink-0">
        <div class="tag-scroll d-flex flex-grow-1">
          <span class="pill p-orange">có tiềm năng</span><span class="pill p-orange">quan tâm đặc biệc</span><span class="pill p-orange">Khách hàng VIP</span><span class="pill p-orange">Lead Hà Nội</span><span class="pill p-teal">Đã tham gia khảo sát</span><span class="pill p-teal">Đăng ký tư vấn</span><span class="pill p-teal">Hẹn</span>
        </div>
        <div class="ai-toggle position-relative d-flex align-items-center flex-shrink-0">
          <svg class="bot"><use href="#bot"/></svg>
          <div class="form-switch p-0 m-0 d-flex"><input class="form-check-input" type="checkbox" role="switch" checked aria-label="Trả lời tự động bằng AI"></div>
          <div class="callout position-absolute"></div>
          <svg class="callout-arrow position-absolute" viewBox="0 0 54 62"><path fill="#f00" d="M2 58L10.300 31 13.700 35Q28 20 49 2.500L50.500 4Q38 22 22.500 43.500L27.700 46.300z"/></svg>
        </div>
      </div>
      <input type="text" class="reply-box w-100 flex-shrink-0" placeholder="Cuộc chat đang được trả lời tự động bằng AI. Vui lòng tắt tính năng để nhắn tin thủ công" aria-label="Tin nhắn">
      <div class="tool-row d-flex align-items-center flex-shrink-0">
        <button type="button" class="tool" aria-label="Gắn thẻ"><svg class="ic-26" fill="currentColor"><use href="#tags"/></svg></button>
        <button type="button" class="tool" aria-label="Chuyển"><svg class="ic-26"><use href="#swap"/></svg></button>
        <button type="button" class="tool" aria-label="Làm mới"><svg class="ic-26" fill="currentColor"><use href="#repeat"/></svg></button>
        <button type="button" class="tool" aria-label="Nhắc hẹn"><svg class="ic-26"><use href="#alarm"/></svg></button>
        <button type="button" class="tool" aria-label="Ghi chú"><svg class="ic-26"><use href="#journal"/></svg></button>
        <button type="button" class="btn btn-primary done-btn ms-auto">Hoàn thành cuộc chat</button>
      </div>
    </main>

    <aside class="info-pane">
      <div class="sec short d-flex align-items-center"><h2>Thông tin khách hàng</h2><div class="acts d-flex ms-auto"><button type="button" aria-label="Thu gọn"><svg class="ic-20"><use href="#down"/></svg></button></div></div>
      <div class="profile d-flex flex-column align-items-center">
        <div class="big-pic position-relative"><svg class="w-100 h-100"><use href="#user"/></svg><span class="pill over p-red position-absolute">Cá nhân</span></div>
        <div class="full d-flex align-items-center"><span>Anh Tân</span><svg class="ic-20" fill="currentColor"><use href="#pencil"/></svg></div>
        <div class="tag-set d-flex"><span class="pill wide p-teal">dự án quan trọng</span><span class="pill wide p-teal">Dũng</span><span class="pill wide more">+1</span></div>
      </div>
      <div class="fact d-flex align-items-center"><svg class="ic-20" fill="currentColor"><use href="#phone"/></svg><a href="#">037845793</a></div>
      <div class="fact d-flex align-items-center"><svg class="ic-20"><use href="#mail"/></svg><span class="blank">-Email-</span></div>
      <div class="fact d-flex align-items-center"><svg class="ic-20"><use href="#pin"/></svg><span class="blank">-Địa chỉ-</span></div>
      <div class="fact d-flex align-items-center"><svg class="ic-20"><use href="#building"/></svg><span class="blank">-Tổ chức-</span></div>
      <div class="fact d-flex align-items-center"><svg class="ic-20" fill="currentColor"><use href="#person"/></svg><a href="#">Ngô Tường Vy (vy.ngo@cloudpro.vn)</a></div>
      <div class="fact d-flex align-items-center"><svg class="ic-20"><use href="#enter"/></svg><span class="blank">-Nguồn-</span></div>
      <div class="fact d-flex align-items-center"><svg class="ic-20"><use href="#note"/></svg><span>Tổ chức: &nbsp;- Số điện thoại: &nbsp;- Email: &nbsp;- Địa ...</span></div>

      <div class="sec d-flex align-items-center"><h2>Nhu cầu</h2><div class="acts d-flex align-items-center ms-auto"><button type="button" aria-label="Làm mới"><svg class="ic-24" fill="currentColor"><use href="#repeat"/></svg></button><button type="button" aria-label="Mở"><svg class="ic-20"><use href="#right"/></svg></button></div></div>
      <div class="sec d-flex align-items-center"><h2>Sản phẩm đã mua</h2><div class="acts d-flex align-items-center ms-auto"><button type="button" aria-label="Làm mới"><svg class="ic-24" fill="currentColor"><use href="#repeat"/></svg></button><button type="button" aria-label="Mở"><svg class="ic-20"><use href="#right"/></svg></button></div></div>
      <div class="sec d-flex align-items-center"><h2>Hoạt động<span class="num">1</span></h2><div class="acts d-flex align-items-center ms-auto"><button type="button" aria-label="Làm mới"><svg class="ic-24" fill="currentColor"><use href="#repeat"/></svg></button><button type="button" aria-label="Thêm"><svg class="ic-20"><use href="#plus"/></svg></button><button type="button" aria-label="Mở"><svg class="ic-20"><use href="#right"/></svg></button></div></div>
      <div class="sec d-flex align-items-center"><h2>Ticket<span class="num">1</span></h2><div class="acts d-flex align-items-center ms-auto"><button type="button" aria-label="Làm mới"><svg class="ic-24" fill="currentColor"><use href="#repeat"/></svg></button><button type="button" aria-label="Thêm"><svg class="ic-20"><use href="#plus"/></svg></button><button type="button" aria-label="Mở"><svg class="ic-20"><use href="#right"/></svg></button></div></div>
      <div class="sec d-flex align-items-center"><h2>Cơ hội</h2><div class="acts d-flex align-items-center ms-auto"><button type="button" aria-label="Làm mới"><svg class="ic-24" fill="currentColor"><use href="#repeat"/></svg></button><button type="button" aria-label="Thêm"><svg class="ic-20"><use href="#plus"/></svg></button><button type="button" aria-label="Mở"><svg class="ic-20"><use href="#right"/></svg></button></div></div>
      <div class="sec d-flex align-items-center"><h2>Đơn hàng<span class="num">1</span></h2><div class="acts d-flex align-items-center ms-auto"><button type="button" aria-label="Làm mới"><svg class="ic-24" fill="currentColor"><use href="#repeat"/></svg></button><button type="button" aria-label="Thêm"><svg class="ic-20"><use href="#plus"/></svg></button><button type="button" aria-label="Mở"><svg class="ic-20"><use href="#right"/></svg></button></div></div>
      <div class="sec short d-flex align-items-center"><h2>Bình luận</h2><div class="acts d-flex ms-auto"><button type="button" aria-label="Mở"><svg class="ic-20"><use href="#right"/></svg></button></div></div>
    </aside>
  </div>
</div>
</div>
<footer class="status-strip flex-shrink-0"></footer>
<script src="https://cdn.jsdelivr.net/npm/bootstrap@5.3.0/dist/js/bootstrap.bundle.min.js"></script>
</body>
</html>
